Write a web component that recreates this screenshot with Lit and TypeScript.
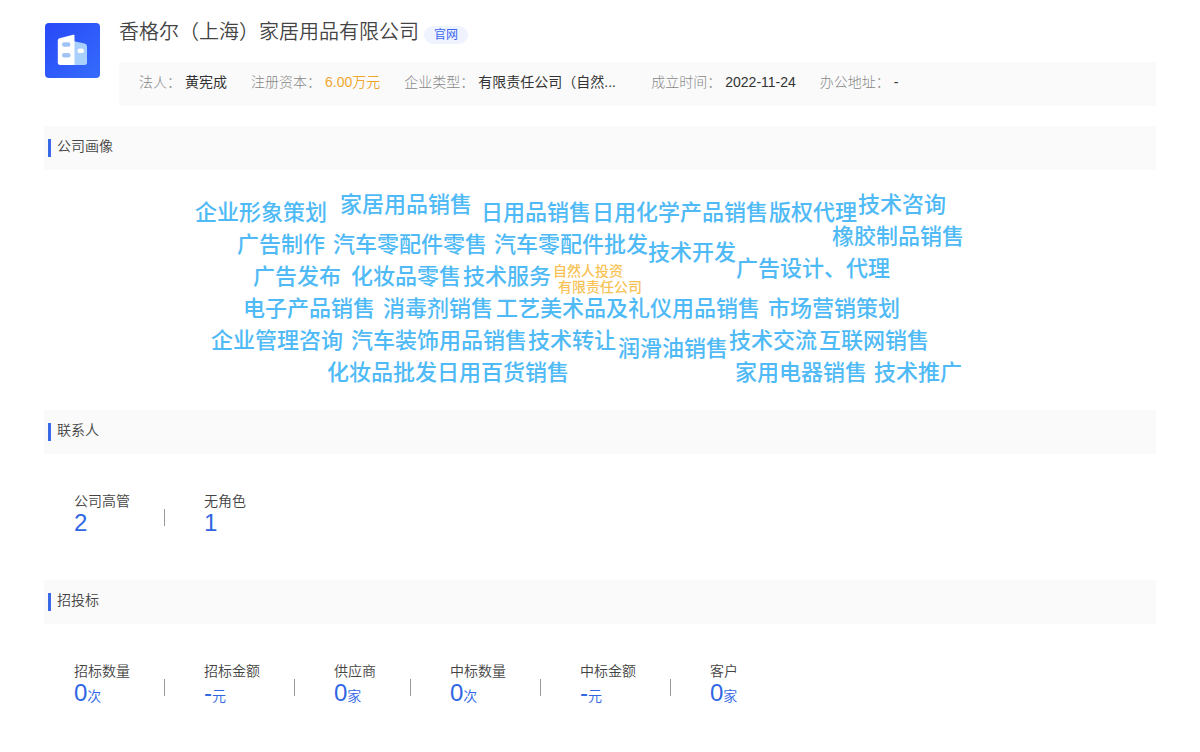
import { LitElement, html, css } from "lit";
import { customElement, property } from "lit/decorators.js";

type Word = { text: string; x: number; y: number; minor?: boolean };
type Stat = { label: string; value: string; unit?: string };

// x is measured from the centre line of the cloud, y from its top edge to the middle of the word.
const WORDS: Word[] = [
  { text: "企业形象策划", x: -405, y: 43 },
  { text: "家居用品销售", x: -260, y: 35 },
  { text: "日用品销售", x: -119, y: 43 },
  { text: "日用化学产品销售", x: -8, y: 43 },
  { text: "版权代理", x: 169, y: 43 },
  { text: "技术咨询", x: 258, y: 35 },
  { text: "广告制作", x: -363, y: 75 },
  { text: "汽车零配件零售", x: -267, y: 75 },
  { text: "汽车零配件批发", x: -106, y: 75 },
  { text: "技术开发", x: 48, y: 83 },
  { text: "橡胶制品销售", x: 232, y: 67 },
  { text: "广告发布", x: -347, y: 107 },
  { text: "化妆品零售", x: -249, y: 107 },
  { text: "技术服务", x: -137, y: 107 },
  { text: "自然人投资", x: -47, y: 101, minor: true },
  { text: "有限责任公司", x: -42, y: 117, minor: true },
  { text: "广告设计、代理", x: 136, y: 99 },
  { text: "电子产品销售", x: -357, y: 139 },
  { text: "消毒剂销售", x: -217, y: 139 },
  { text: "工艺美术品及礼仪用品销售", x: -104, y: 139 },
  { text: "市场营销策划", x: 168, y: 139 },
  { text: "企业管理咨询", x: -389, y: 171 },
  { text: "汽车装饰用品销售", x: -249, y: 171 },
  { text: "技术转让", x: -72, y: 171 },
  { text: "润滑油销售", x: 18, y: 179 },
  { text: "技术交流", x: 129, y: 171 },
  { text: "互联网销售", x: 219, y: 171 },
  { text: "化妆品批发", x: -273, y: 203 },
  { text: "日用百货销售", x: -163, y: 203 },
  { text: "家用电器销售", x: 135, y: 203 },
  { text: "技术推广", x: 274, y: 203 },
];

const CONTACTS: Stat[] = [
  { label: "公司高管", value: "2" },
  { label: "无角色", value: "1" },
];

const BIDS: Stat[] = [
  { label: "招标数量", value: "0", unit: "次" },
  { label: "招标金额", value: "-", unit: "元" },
  { label: "供应商", value: "0", unit: "家" },
  { label: "中标数量", value: "0", unit: "次" },
  { label: "中标金额", value: "-", unit: "元" },
  { label: "客户", value: "0", unit: "家" },
];

@customElement("section-title")
class SectionTitle extends LitElement {
  static styles = css`
    :host { display: block; }
    .bar {
      display: flex;
      align-items: center;
      height: 44px;
      padding-left: 4px;
      box-sizing: border-box;
      background: #fafafa;
    }
    .mark { width: 3px; height: 18px; background: #3a69e8; }
    .title {
      margin: 0;
      padding: 0 6px 4px;
      font-size: 14px;
      line-height: 20px;
      font-weight: 350;
      color: #444;
    }
  `;
  @property() heading = "";
  render() {
    return html`<div class="bar"><span class="mark"></span><h2 class="title">${this.heading}</h2></div>`;
  }
}

@customElement("stat-row")
class StatRow extends LitElement {
  static styles = css`
    :host { display: block; }
    .row { display: flex; flex-wrap: wrap; margin: 0; padding: 36px 30px 46px; }
    .stat { display: flex; align-items: center; }
    .stat:not(:last-child)::after {
      content: "";
      width: 1px;
      height: 17px;
      margin: 11px 39px 0 34px;
      background: #999;
    }
    .label { font-size: 14px; line-height: 22px; font-weight: 350; color: #444; }
    .value { margin: 0; font-size: 24px; line-height: 22px; color: #2f66e4; }
    .unit { font-size: 14px; line-height: 14px; font-weight: 350; }
  `;
  @property({ attribute: false }) stats: Stat[] = [];
  render() {
    return html`<dl class="row">
      ${this.stats.map(
        (s) => html`<div class="stat"><div>
          <dt class="label">${s.label}</dt>
          <dd class="value">${s.value}${s.unit ? html`<span class="unit">${s.unit}</span>` : ""}</dd>
        </div></div>`
      )}
    </dl>`;
  }
}

@customElement("word-cloud")
class WordCloud extends LitElement {
  static styles = css`
    :host { display: block; }
    .cloud { position: relative; height: 240px; overflow: hidden; }
    .word {
      position: absolute;
      transform: translateY(-50%);
      white-space: nowrap;
      font-size: 22px;
      line-height: 32px;
      font-weight: 500;
      color: #4fbaf5;
    }
    .minor { font-size: 14px; line-height: 20px; color: #f7c356; }
  `;
  render() {
    return html`<div class="cloud">
      ${WORDS.map(
        (w) => html`<span class="word ${w.minor ? "minor" : ""}" style="left:calc(50% + ${w.x}px);top:${w.y}px">${w.text}</span>`
      )}
    </div>`;
  }
}

@customElement("app-root")
class AppRoot extends LitElement {
  static styles = css`
    :host {
      display: block;
      background: #fff;
      font-family: "Liberation Sans", "Noto Sans CJK SC", sans-serif;
      color: #333;
    }
    .page { padding: 17px 44px 0; }
    .head { display: flex; gap: 19px; margin-bottom: 20px; }
    .logo { flex: none; width: 56px; height: 56px; margin-top: 5px; }
    .info { flex: 1; min-width: 0; }
    .name-row { display: flex; align-items: center; gap: 5px; margin-bottom: 15px; }
    .name { margin: 0; font-size: 20px; line-height: 30px; font-weight: 350; color: #444; }
    .site {
      margin-top: 6px;
      padding: 0 10px;
      border-radius: 9px;
      background: #eef3fe;
      font-size: 12px;
      line-height: 18px;
      color: #3a66ee;
      text-decoration: none;
    }
    .facts {
      display: flex;
      flex-wrap: wrap;
      gap: 4px 24px;
      margin: 0;
      padding: 10px 20px 14px;
      background: #fafafa;
      font-size: 14px;
      line-height: 20px;
    }
    .fact { display: flex; gap: 4px; }
    .key { font-weight: 300; color: #888; }
    .val { margin: 0; white-space: nowrap; }
    .type { min-width: 149px; }
    .money { color: #f0a72e; font-weight: 350; }
  `;

  private fact(key: string, val: string, cls = "") {
    return html`<div class="fact"><dt class="key">${key}：</dt><dd class="val ${cls}">${val}</dd></div>`;
  }

  render() {
    return html`<main class="page">
      <header class="head">
        <svg class="logo" viewBox="0 0 56 56" aria-hidden="true">
          <defs>
            <linearGradient id="bg" x1="0" y1="0" x2="1" y2="1">
              <stop offset="0" stop-color="#2848f8" />
              <stop offset="1" stop-color="#356cfb" />
            </linearGradient>
          </defs>
          <rect x="1" y="1" width="55" height="55" rx="4" fill="url(#bg)" />
          <path d="M29 19 L40.500 21.500 Q43 22.200 43 24.500 V40.500 Q43 43 40.500 43 H29 Z" fill="#a9cffc" />
          <path d="M30.500 13.400 V43 H16.500 Q13.800 43 13.800 40.500 V18.500 Q13.800 16.800 15.500 16.300 L29 12.800 Q30.500 12.500 30.500 13.400 Z" fill="#fff" />
          <rect x="18" y="20.300" width="8.500" height="4.500" rx="2.200" fill="#9fc3f7" />
          <rect x="18" y="31" width="8.500" height="4.500" rx="2.200" fill="#9fc3f7" />
          <rect x="33.500" y="26.600" width="6.500" height="4.500" rx="2.200" fill="#fff" />
        </svg>
        <div class="info">
          <div class="name-row">
            <h1 class="name">香格尔（上海）家居用品有限公司</h1>
            <a class="site" href="#">官网</a>
          </div>
          <dl class="facts">
            ${this.fact("法人", "黄宪成")}
            ${this.fact("注册资本", "6.00万元", "money")}
            ${this.fact("企业类型", "有限责任公司（自然...", "type")}
            ${this.fact("成立时间", "2022-11-24")}
            ${this.fact("办公地址", "-")}
          </dl>
        </div>
      </header>
      <section>
        <section-title heading="公司画像"></section-title>
        <word-cloud></word-cloud>
      </section>
      <section>
        <section-title heading="联系人"></section-title>
        <stat-row .stats=${CONTACTS}></stat-row>
      </section>
      <section>
        <section-title heading="招投标"></section-title>
        <stat-row .stats=${BIDS}></stat-row>
      </section>
    </main>`;
  }
}
